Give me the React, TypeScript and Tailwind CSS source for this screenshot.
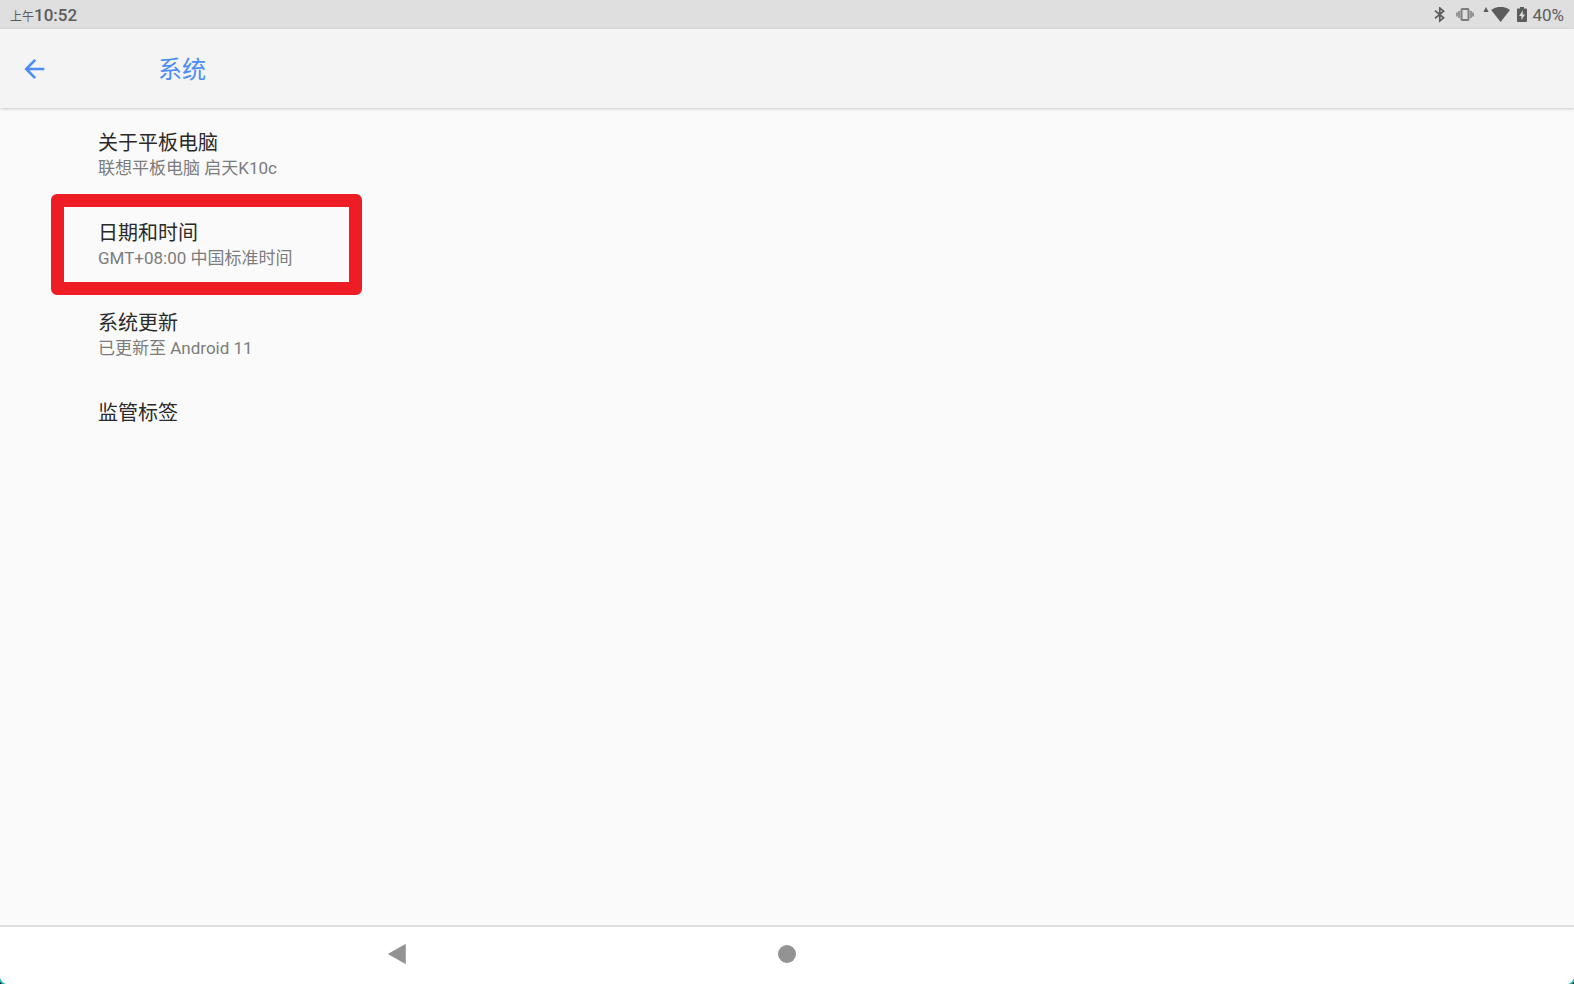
interface SettingItem {
  title: string
  summary?: string
  highlighted?: boolean
}

const items: SettingItem[] = [
  { title: '关于平板电脑', summary: '联想平板电脑 启天K10c' },
  { title: '日期和时间', summary: 'GMT+08:00 中国标准时间', highlighted: true },
  { title: '系统更新', summary: '已更新至 Android 11' },
  { title: '监管标签' },
]

function StatusBar() {
  return (
    <div className="h-[29px] shrink-0 bg-[#dfdfdf] px-[10px] flex items-center justify-between text-[#5c5c5c]">
      <div className="flex items-baseline pt-[2px] leading-5">
        <span className="text-[12px]">上午</span>
        <span className="text-[17px] font-medium">10:52</span>
      </div>
      <div className="flex items-center">
        {/* bluetooth */}
        <svg className="w-4 h-4 mr-[9px]" viewBox="0 0 16 16" fill="none" stroke="currentColor" strokeWidth="1.7">
          <path d="M4 3.7 L12.6 10.8 L8.8 14 V1 L12.6 4.2 L4 11.3" />
        </svg>
        {/* vibrate */}
        <svg className="w-[18px] h-4 mr-[9px]" viewBox="0 0 18 16" fill="none" stroke="#7c7c7c" strokeWidth="1.5">
          <rect x="5.5" y="2" width="7" height="11" rx="0.8" strokeWidth="2" />
          <path d="M3 4v7M15 4v7M1 5.5v4M17 5.5v4" />
        </svg>
        {/* wifi with upload mark */}
        <svg className="w-[27px] h-4 mr-[7px]" viewBox="0 0 27 16" fill="currentColor">
          <path d="M0.4 5 L3 0 L5.6 5Z" />
          <path d="M8.2 3 C13.5 -1.2 21.7 -1.2 27 3 L17.6 15Z" />
        </svg>
        {/* battery */}
        <svg className="w-[10px] h-4 mr-[5px]" viewBox="0 0 10 16">
          <path fill="currentColor" d="M3 0h4v1.6h2.2q.8 0 .8.8v11.8q0 .8-.8.8H.8q-.8 0-.8-.8V2.4q0-.8.8-.8H3z" />
          <path fill="#dfdfdf" d="M6 3.3 L2 9h2.4v4L8 7.4H5.6z" />
        </svg>
        <span className="text-[17px] leading-5">40%</span>
      </div>
    </div>
  )
}

function SettingRow({ title, summary, highlighted }: SettingItem) {
  return (
    <li className="relative">
      <button
        type="button"
        className={`w-full pl-[98px] text-left flex flex-col justify-center ${summary ? 'h-[90px]' : 'h-[66px]'}`}
      >
        <span className="text-[20px] leading-[26px] text-[#2a2a2a]">{title}</span>
        {summary && <span className="text-[17px] leading-6 text-[#7c7c7c]">{summary}</span>}
      </button>
      {highlighted && (
        <div className="absolute pointer-events-none left-[51px] -top-[6px] w-[311px] h-[101px] border-[13px] border-[#ee1c24] rounded-[6px]" />
      )}
    </li>
  )
}

export default function App() {
  return (
    <div className="min-h-screen bg-[#1a1a1a]">
      <div className="min-h-screen flex flex-col overflow-hidden rounded-b-[8px] shadow-[0_0_0_2px_#1fb5b5] bg-[#fafafa] font-['Roboto','Noto_Sans_CJK_SC',sans-serif]">
        <StatusBar />

        <header className="h-[79px] shrink-0 flex items-center bg-[#f4f4f4] text-[#4c8df5] shadow-[0_1px_3px_rgba(0,0,0,0.2)]">
          <button type="button" aria-label="返回" className="ml-[20px] p-[3px]">
            <svg className="w-6 h-6" viewBox="0 0 24 24" fill="none" stroke="currentColor" strokeWidth="2.6">
              <path d="M21.3 12H3.5M12.2 2.9L3.2 12l9 9.1" />
            </svg>
          </button>
          <h1 className="ml-[108px] pt-[2px] text-[24px] leading-8">系统</h1>
        </header>

        <ul className="flex-1 pt-[2px]">
          {items.map((item) => (
            <SettingRow key={item.title} {...item} />
          ))}
        </ul>

        <nav className="h-[59px] shrink-0 pb-[3px] bg-white border-t-2 border-[#dfdfdf]">
          <div className="h-full max-w-[1170px] mx-auto grid grid-cols-3 place-items-center">
            <button type="button" aria-label="后退">
              <svg className="w-6 h-6" viewBox="0 0 24 24" fill="#939393">
                <path d="M20.8 2.6v18.8q0 .8-.7.4L3.6 12.5q-.8-.5 0-1L20.1 2.2q.7-.4.7.4z" />
              </svg>
            </button>
            <button type="button" aria-label="主屏幕">
              <svg className="w-6 h-6" viewBox="0 0 24 24" fill="#939393">
                <circle cx="12" cy="12" r="9" />
              </svg>
            </button>
          </div>
        </nav>
      </div>
    </div>
  )
}
